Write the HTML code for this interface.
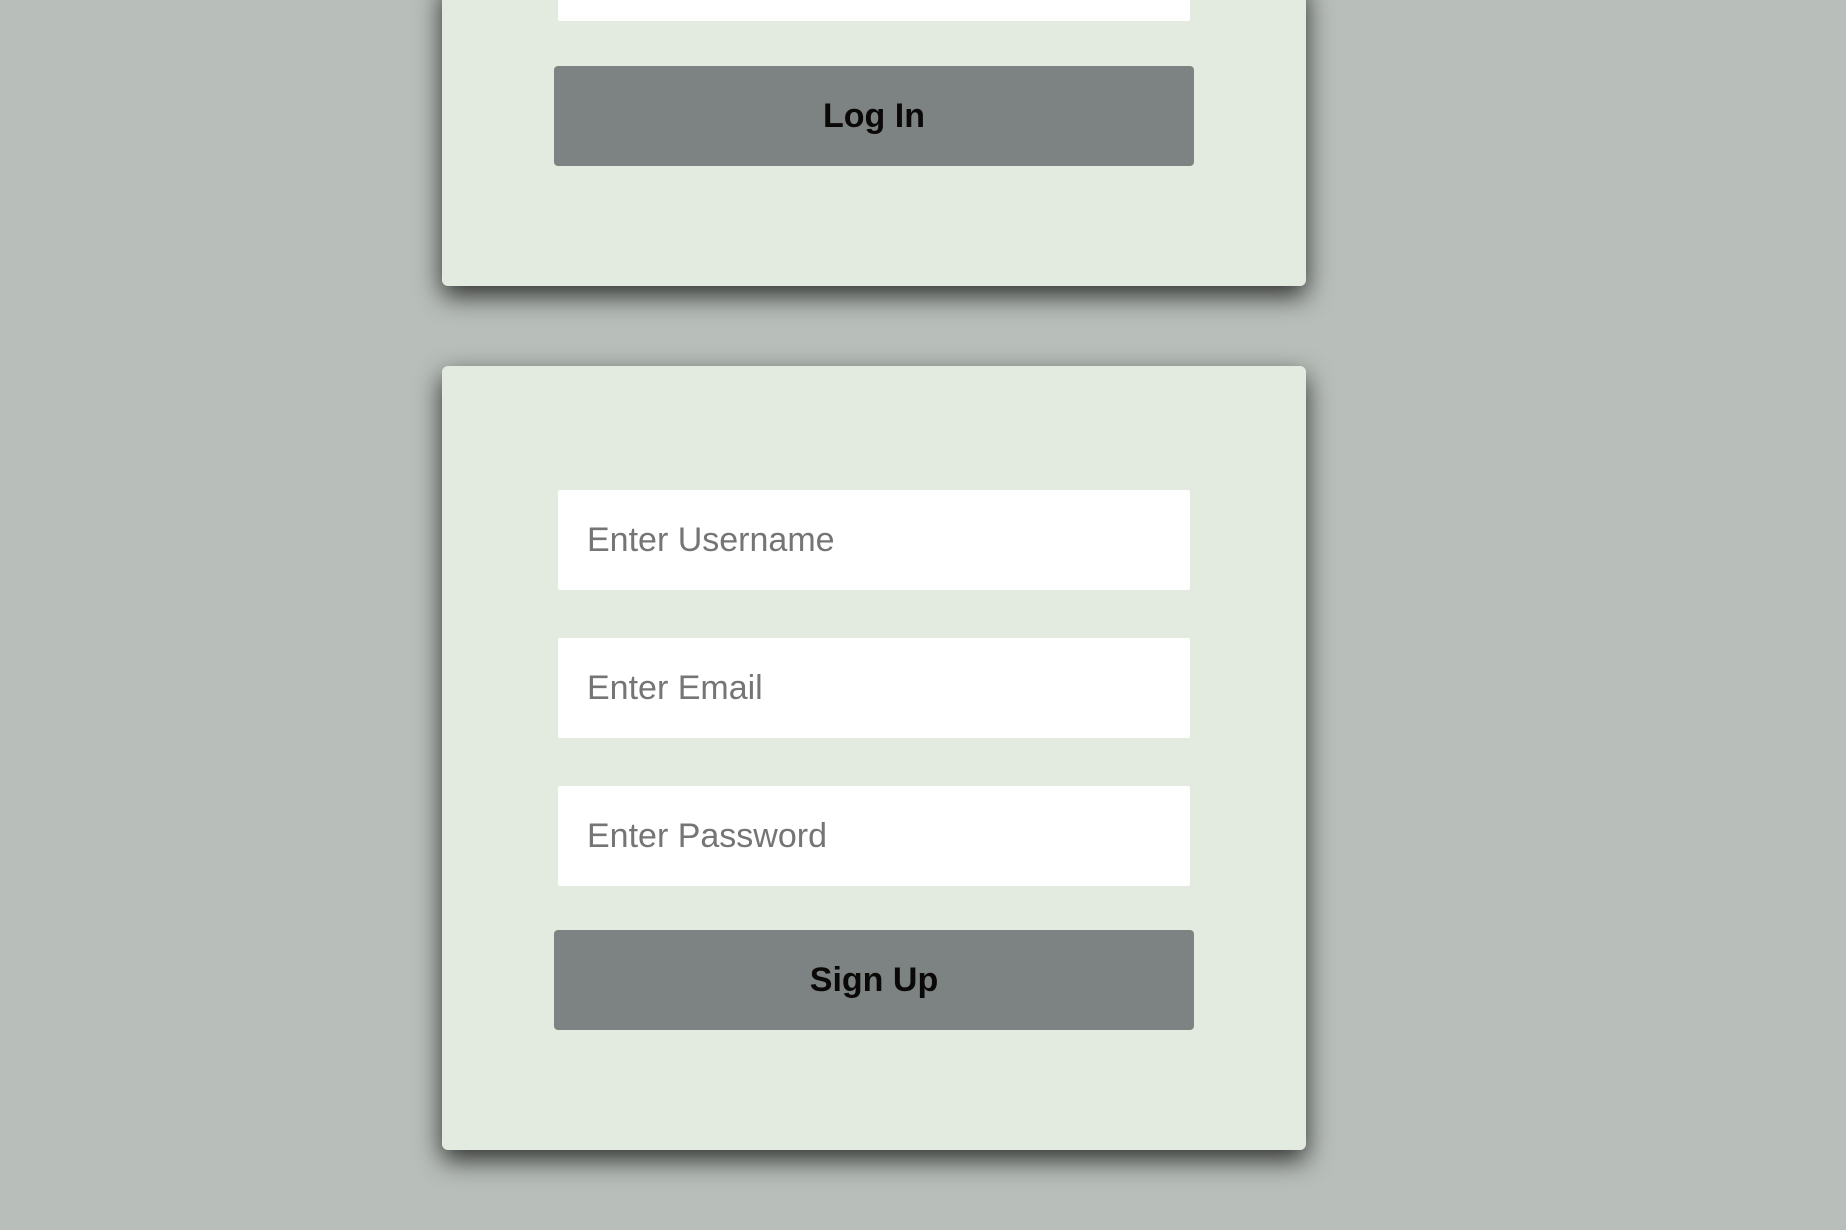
<!DOCTYPE html>
<html><head><meta charset="utf-8"><style>
html,body{margin:0;padding:0;width:1846px;height:1230px;overflow:hidden;background:#b8beb9;font-family:"Liberation Sans",Arial,sans-serif;}
.card{position:absolute;left:442px;width:864px;background:#e3ebe0;border-radius:6px;box-shadow:0 10px 26px rgba(0,0,0,0.75);}
.inp{position:absolute;left:558px;width:632px;height:100px;background:#fff;border-radius:2px;box-sizing:border-box;padding-left:29px;line-height:100px;font-size:34px;color:#757575;}
.btn{position:absolute;left:554px;width:640px;height:100px;background:#7c8382;border-radius:4px;text-align:center;line-height:100px;font-size:34px;font-weight:bold;color:#0b0808;}
</style></head><body>
<div class="card" style="top:-20px;height:306px"></div>
<div class="inp" style="top:-79px"></div>
<div class="btn" style="top:66px">Log In</div>
<div class="card" style="top:366px;height:784px"></div>
<div class="inp" style="top:490px">Enter Username</div>
<div class="inp" style="top:638px">Enter Email</div>
<div class="inp" style="top:786px">Enter Password</div>
<div class="btn" style="top:930px">Sign Up</div>
</body></html>
